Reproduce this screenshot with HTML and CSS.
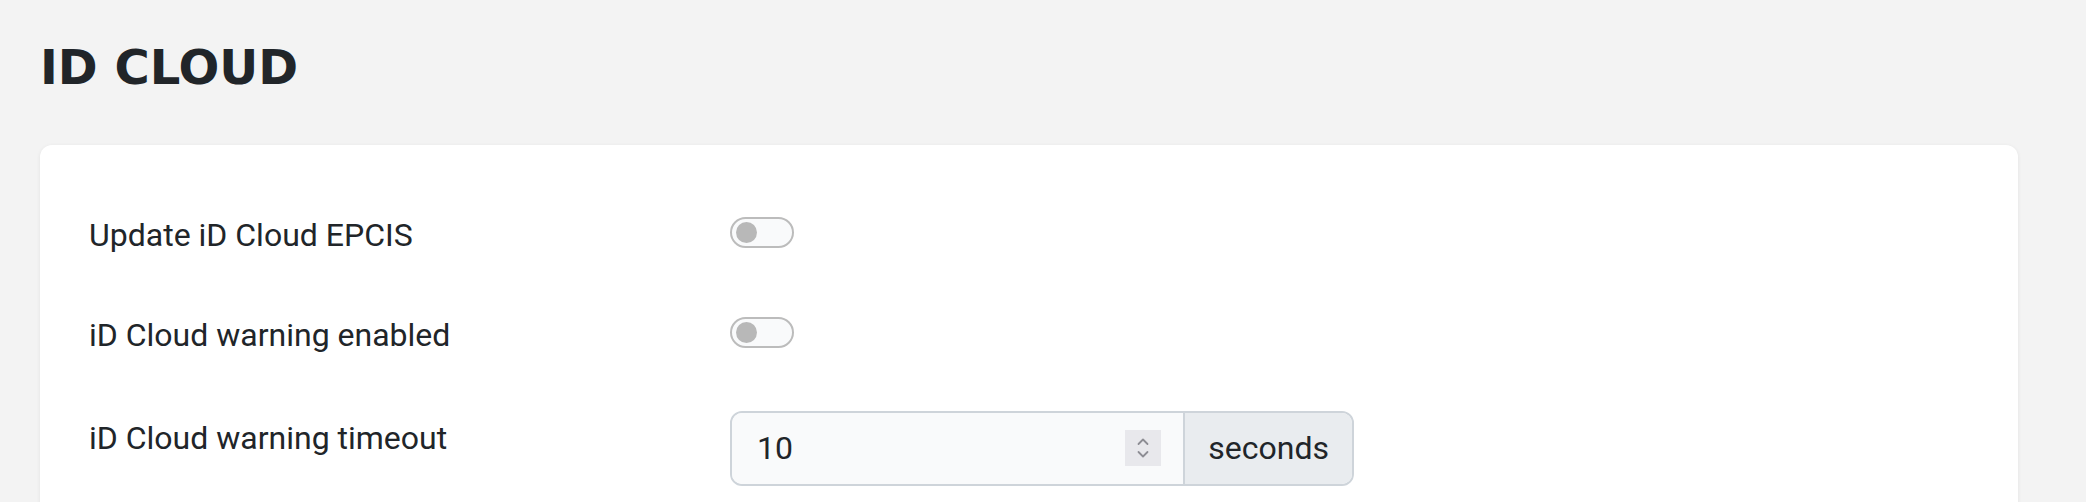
FILE: index.html
```html
<!DOCTYPE html>
<html lang="en">
<head>
<meta charset="utf-8">
<title>ID Cloud</title>
<link rel="stylesheet" href="styles.css">
</head>
<body>
<main class="page">
  <h1 class="page-title">ID CLOUD</h1>
  <section class="card">
    <div class="settings">
      <div class="setting-row">
        <label class="setting-label">Update iD Cloud EPCIS</label>
        <div class="setting-control">
          <span class="switch"><span class="switch-knob"></span></span>
        </div>
      </div>
      <div class="setting-row">
        <label class="setting-label">iD Cloud warning enabled</label>
        <div class="setting-control">
          <span class="switch"><span class="switch-knob"></span></span>
        </div>
      </div>
      <div class="setting-row setting-row-input">
        <label class="setting-label">iD Cloud warning timeout</label>
        <div class="setting-control">
          <div class="input-group">
            <div class="number-input">
              <span class="number-value">10</span>
              <span class="spinner">
                <svg width="14" height="26" viewBox="0 0 14 26" fill="none" stroke="#8d8d94" stroke-width="1.8" stroke-linecap="round" stroke-linejoin="round">
                  <path d="M2.5 9 L7 4.5 L11.5 9"/>
                  <path d="M2.5 17 L7 21.5 L11.5 17"/>
                </svg>
              </span>
            </div>
            <span class="input-addon">seconds</span>
          </div>
        </div>
      </div>
    </div>
  </section>
</main>
</body>
</html>
```

FILE: styles.css
```css
html, body {
  margin: 0;
  padding: 0;
}

body {
  background: #f3f3f3;
  color: #212529;
  font-family: Roboto, "Liberation Sans", sans-serif;
  overflow: hidden;
}

.page {
  padding: 39px 68px 0 40px;
}

.page-title {
  margin: 0 0 48px 0;
  font-family: "DejaVu Sans", sans-serif;
  font-weight: 700;
  font-size: 48px;
  line-height: 57.6px;
  letter-spacing: 0;
  color: #212529;
}

.card {
  background: #ffffff;
  border-radius: 12px;
  box-shadow: 0 1px 4px rgba(0, 0, 0, 0.07);
  padding: 66px 48px 80px 49px;
  min-height: 400px;
}

.settings {
  display: flex;
  flex-direction: column;
  gap: 52px;
}

.setting-row {
  display: grid;
  grid-template-columns: 641px 624px;
  align-items: start;
}

.setting-label {
  font-size: 32px;
  line-height: 48px;
  color: #212529;
}

.setting-row-input .setting-label {
  padding-top: 3px;
}

.setting-control {
  display: flex;
}

.switch {
  margin-top: 6px;
  box-sizing: border-box;
  width: 64px;
  height: 31px;
  border: 2px solid #bcbcbc;
  border-radius: 16px;
  background: #f9fafb;
  display: flex;
  align-items: center;
  padding-left: 4px;
}

.switch-knob {
  width: 21px;
  height: 21px;
  border-radius: 50%;
  background: #b8b8b8;
}

.input-group {
  box-sizing: border-box;
  width: 624px;
  height: 75px;
  display: flex;
  border: 2px solid #ced4da;
  border-radius: 12px;
  overflow: hidden;
  font-size: 32px;
}

.number-input {
  flex: 1;
  display: flex;
  align-items: center;
  justify-content: space-between;
  padding: 0 22px 0 25px;
  background: #f9fafb;
}

.number-value {
  color: #212529;
}

.spinner {
  width: 36px;
  height: 36px;
  background: #e8e8ec;
  display: flex;
  align-items: center;
  justify-content: center;
}

.input-addon {
  display: flex;
  align-items: center;
  padding: 0 23px;
  background: #e9ecef;
  border-left: 2px solid #ced4da;
  color: #212529;
}
```
